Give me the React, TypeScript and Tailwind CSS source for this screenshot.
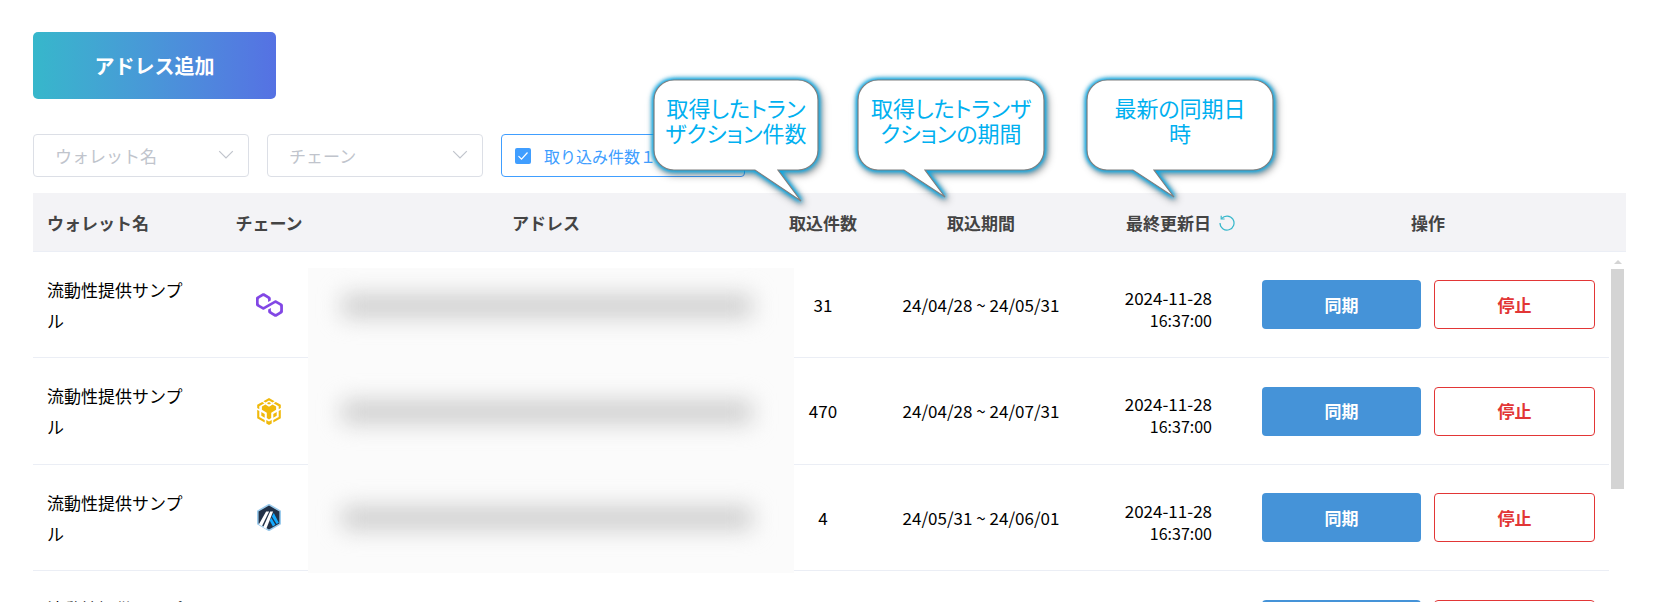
import React from 'react';

interface WalletRow {
  id: number;
  name: string;
  chain: 'polygon' | 'bnb' | 'arbitrum';
  count: number;
  from: string;
  to: string;
  date: string;
  time: string;
}

const rows: WalletRow[] = [
  { id: 1, name: '流動性提供サンプル', chain: 'polygon', count: 31, from: '24/04/28', to: '24/05/31', date: '2024-11-28', time: '16:37:00' },
  { id: 2, name: '流動性提供サンプル', chain: 'bnb', count: 470, from: '24/04/28', to: '24/07/31', date: '2024-11-28', time: '16:37:00' },
  { id: 3, name: '流動性提供サンプル', chain: 'arbitrum', count: 4, from: '24/05/31', to: '24/06/01', date: '2024-11-28', time: '16:37:00' },
  { id: 4, name: '流動性提供サンプル', chain: 'polygon', count: 12, from: '24/05/31', to: '24/06/01', date: '2024-11-28', time: '16:37:00' },
];

const PolygonIcon = () => (
  <svg viewBox="0 0 38.4 33.5" className="w-[27px] h-6" role="img" aria-label="Polygon">
    <path
      fill="#8247e5"
      d="M29 10.2c-.7-.4-1.6-.4-2.4 0L21 13.5l-3.8 2.1-5.5 3.3c-.7.4-1.6.4-2.4 0L5 16.3c-.7-.4-1.2-1.2-1.2-2.1v-5c0-.8.4-1.6 1.2-2.1l4.3-2.5c.7-.4 1.6-.4 2.4 0L16 7.2c.7.4 1.2 1.2 1.2 2.1v3.3l3.8-2.2V7c0-.8-.4-1.6-1.2-2.1l-8-4.7c-.7-.4-1.6-.4-2.4 0L1.2 5C.4 5.4 0 6.2 0 7v9.4c0 .8.4 1.6 1.2 2.1l8.1 4.7c.7.4 1.6.4 2.4 0l5.500-3.200 3.800-2.200 5.500-3.200c.7-.4 1.6-.4 2.4 0l4.3 2.5c.7.4 1.2 1.2 1.2 2.1v5c0 .8-.4 1.6-1.200 2.100L29 28.800c-.7.4-1.6.4-2.4 0l-4.3-2.5c-.7-.4-1.2-1.2-1.2-2.1V21l-3.8 2.2v3.3c0 .8.4 1.6 1.2 2.1l8.1 4.7c.7.4 1.6.4 2.4 0l8.1-4.7c.7-.4 1.2-1.2 1.2-2.1V17c0-.8-.4-1.6-1.2-2.1L29 10.2z"
    />
  </svg>
);

const BnbIcon = () => (
  <svg viewBox="0 0 24 27" className="w-6 h-[27px]" role="img" aria-label="BNB Chain">
    <g fill="#f0b90b">
      <path d="M12 0l5.6 3.2-2.1 1.3L12 2.5 8.5 4.5 6.4 3.2z" />
      <path d="M12 4l2.2 1.3L12 6.6 9.8 5.3z" />
      <path d="M5.2 4l2.2 1.2-5.1 3v3L.2 10V6.8z" />
      <path d="M18.8 4l-2.2 1.2 5.1 3v3l2.1-1.2V6.8z" />
      <path d="M8.4 6.6L12 8.7l3.6-2.1 3.5 2v3.2L14.2 14.7v5.4L12 21.4l-2.2-1.3v-5.4L4.9 11.8V8.6z" />
      <path d="M.2 11.8l2.1 1.2v5.9l5.4 3.2v2.4L.2 20.2z" />
      <path d="M23.8 11.8l-2.1 1.2v5.9l-5.4 3.2v2.4l7.5-4.3z" />
      <path d="M4.3 14l3.4 2v3.8l-3.400-2z" />
      <path d="M19.7 14l-3.4 2v3.8l3.400-2z" />
      <path d="M9.3 22l2.7 1.6 2.7-1.6v3.4L12 27l-2.7-1.6z" />
    </g>
  </svg>
);

const ArbitrumIcon = () => (
  <svg viewBox="0 0 24 27" className="w-6 h-[27px]" role="img" aria-label="Arbitrum">
    <path d="M12 .6l11.2 6.5v12.8L12 26.4.8 19.9V7.1z" fill="#213147" stroke="#9dcced" strokeWidth="1.6" />
    <path d="M14.9 12.5l1.9-3.6 5 9.8-2.2 1.4z" fill="#12aaff" />
    <path d="M12.7 16.6l1.5-2.8 4.2 7-2.5 1.8z" fill="#12aaff" />
    <path d="M9.1 7.4h3L4.9 22.2l-3-2z" fill="#fff" />
    <path d="M13.2 7.4h2.9L9.2 25l-3-1.7z" fill="#fff" />
  </svg>
);

const chainIcons = {
  polygon: <PolygonIcon />,
  bnb: <BnbIcon />,
  arbitrum: <ArbitrumIcon />,
};

interface FilterSelectProps {
  id: string;
  label: string;
}

const FilterSelect: React.FC<FilterSelectProps> = ({ id, label }) => (
  <div className="relative w-[216px]">
    <select
      id={id}
      aria-label={label}
      defaultValue=""
      className="w-full h-[43px] pl-[21px] pr-10 appearance-none rounded border border-[#dcdfe6] bg-white text-[17px] text-[#c0c4cc]"
    >
      <option value="">{label}</option>
    </select>
    <svg viewBox="0 0 16 10" className="absolute right-[15px] top-4 w-4 h-[10px] pointer-events-none" fill="none" stroke="#c0c4cc" strokeWidth="1.2">
      <path d="M1.2 1.2L8 8l6.8-6.8" />
    </svg>
  </div>
);

interface CalloutProps {
  width: number;
  path: string;
  className: string;
  children: React.ReactNode;
}

// Speech bubble hanging above a column header
const Callout: React.FC<CalloutProps> = ({ width, path, className, children }) => (
  <div className={`absolute -top-[113px] z-10 h-[90px] font-normal ${className}`}>
    <svg
      viewBox={`0 0 ${width} 90`}
      className="absolute inset-0 w-full h-full overflow-visible [filter:drop-shadow(0_0_2px_#00a8e8)_drop-shadow(0_0_2px_#00a8e8)_drop-shadow(2px_3px_3px_rgba(0,0,0,0.4))]"
    >
      <path d={path} fill="#fff" stroke="#7f7f7f" strokeWidth="1.2" />
    </svg>
    <p className="relative px-2 pt-[15px] text-center text-[22px] leading-[25px] text-[#00b0f0] [font-feature-settings:'palt']">{children}</p>
  </div>
);

const App: React.FC = () => {
  return (
    <div className="h-screen overflow-hidden bg-white pt-8 pr-8 pl-[33px] text-[17px] text-black font-['Noto_Sans_CJK_JP',sans-serif]">
      <button className="block w-[243px] h-[67px] rounded-[5px] bg-linear-to-r from-[#36b7cb] to-[#5571e3] text-xl font-bold text-white">
        アドレス追加
      </button>

      <div className="mt-[35px] flex gap-[18px]">
        <FilterSelect id="wallet" label="ウォレット名" />
        <FilterSelect id="chain" label="チェーン" />
        <label className="flex items-center w-[244px] h-[43px] pl-[13px] rounded border border-[#409eff] text-base text-[#409eff]">
          <span className="relative mr-[13px] size-4">
            <input type="checkbox" defaultChecked className="block size-4 appearance-none rounded-xs bg-[#409eff]" />
            <svg viewBox="0 0 16 16" className="absolute inset-0 size-4 pointer-events-none" fill="none" stroke="#fff" strokeWidth="1.2">
              <path d="M3.5 8.2l3 3 6-6.700" />
            </svg>
          </span>
          取り込み件数１
        </label>
      </div>

      <table className="mt-4 w-full table-fixed border-separate border-spacing-0">
        <colgroup>
          <col className="w-[193px]" />
          <col className="w-[86px]" />
          <col />
          <col className="w-[86px]" />
          <col className="w-[230px]" />
          <col className="w-[151px]" />
          <col className="w-[362px]" />
          <col className="w-[17px]" />
        </colgroup>
        <thead className="bg-[#f3f3f6] text-[#444]">
          <tr className="h-[59px] [&>th]:border-b [&>th]:border-[#ebeef5] [&>th]:p-0 [&>th]:pt-0.5">
            <th><div className="pl-[14px] text-left">ウォレット名</div></th>
            <th>チェーン</th>
            <th>アドレス</th>
            <th className="relative">
              <Callout
                width={164}
                className="-left-[126px] w-[164px]"
                path="M20 0H144A20 20 0 0 1 164 20V70A20 20 0 0 1 144 90H124L147 121L101 90H20A20 20 0 0 1 0 70V20A20 20 0 0 1 20 0Z"
              >
                取得したトランザクション件数
              </Callout>
              取込件数
            </th>
            <th className="relative">
              <Callout
                width={186}
                className="-left-2 w-[186px]"
                path="M20 0H166A20 20 0 0 1 186 20V70A20 20 0 0 1 166 90H67L87 117L46 90H20A20 20 0 0 1 0 70V20A20 20 0 0 1 20 0Z"
              >
                取得したトランザ<br />クションの期間
              </Callout>
              取込期間
            </th>
            <th className="relative">
              <Callout
                width={186}
                className="-left-[9px] w-[186px]"
                path="M20 0H166A20 20 0 0 1 186 20V70A20 20 0 0 1 166 90H67L87 117L46 90H20A20 20 0 0 1 0 70V20A20 20 0 0 1 20 0Z"
              >
                最新の同期日<br />時
              </Callout>
              <div className="flex items-center justify-end gap-2 pr-3 whitespace-nowrap">
                最終更新日
                <button aria-label="更新">
                  <svg viewBox="0 0 16 16" className="block size-4" fill="none" stroke="#36b7cb" strokeWidth="1.2">
                    <path d="M2.600 3.600A7 7 0 1 1 1 8" />
                    <path d="M2.200 .8V4H5.600" />
                  </svg>
                </button>
              </div>
            </th>
            <th>操作</th>
            <th />
          </tr>
        </thead>
        <tbody>
          {rows.map((row, index) => (
            <tr key={row.id} className="h-[106px] even:h-[107px] text-center [&>td]:p-0">
              <td className="border-b border-[#ebeef5]">
                <div className="pl-[14px] pr-8 text-left leading-[31px] break-all">{row.name}</div>
              </td>
              <td className="border-b border-[#ebeef5]">
                <div className="flex justify-center">{chainIcons[row.chain]}</div>
              </td>
              {index === 0 && (
                <td rowSpan={3} className="relative">
                  {/* Masked addresses */}
                  <div className="absolute top-4 -bottom-0.5 -left-1 -right-[14px] flex flex-col overflow-hidden bg-[#fbfbfb]">
                    {rows.slice(0, 3).map((r) => (
                      <div key={r.id} className="h-[106px] shrink-0 pt-[26px] pl-[34px] pr-[42px]">
                        <div className="h-6 bg-[#cfcfcf] blur-[11px]" />
                      </div>
                    ))}
                  </div>
                </td>
              )}
              {index === 3 && <td />}
              <td className="border-b border-[#ebeef5]">{row.count}</td>
              <td className="border-b border-[#ebeef5]">
                {row.from} ~ {row.to}
              </td>
              <td className="border-b border-[#ebeef5]">
                <div className="pt-2 pr-[35px] text-right leading-[22px]">
                  {row.date}
                  <div className="text-base leading-[22px]">{row.time}</div>
                </div>
              </td>
              <td className="border-b border-[#ebeef5]">
                <div className="flex gap-[13px] pl-[15px] pr-[14px]">
                  <button className="flex-1 h-[49px] rounded bg-[#4593d8] font-bold text-white">同期</button>
                  <button className="flex-1 h-[49px] rounded border border-[#e23636] bg-white font-bold text-[#e23636]">停止</button>
                </div>
              </td>
              {index === 0 && (
                <td rowSpan={4} className="align-top">
                  <div className="flex flex-col items-center gap-[5px] pt-2">
                    <svg viewBox="0 0 8 4" className="w-2 h-1" fill="#d4d4d4">
                      <path d="M4 0l4 4H0z" />
                    </svg>
                    <div className="w-[13px] h-[220px] bg-[#d4d4d4]" />
                  </div>
                </td>
              )}
            </tr>
          ))}
        </tbody>
      </table>
    </div>
  );
};

export default App;
